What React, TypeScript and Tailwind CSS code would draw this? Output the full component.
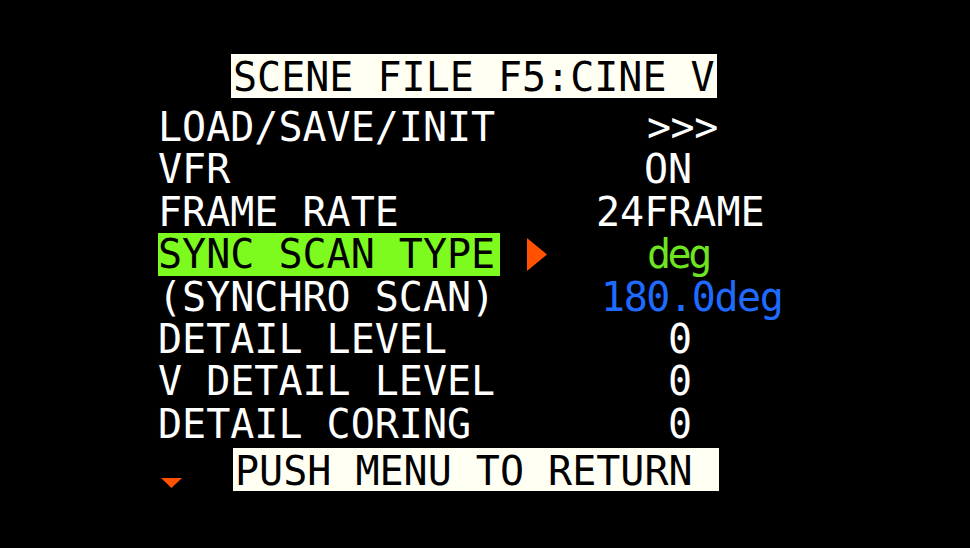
import React from 'react';

const rows: { label: string; value: string; offset: string; tone?: string }[] = [
  { label: 'LOAD/SAVE/INIT', value: '>>>', offset: 'ml-[53px] tracking-[-0.5px]' },
  { label: 'VFR', value: 'ON', offset: 'ml-[50px]' },
  { label: 'FRAME RATE', value: '24FRAME', offset: 'ml-[2px]' },
];

const rest: { label: string; value: string; offset: string; tone?: string }[] = [
  { label: '(SYNCHRO SCAN)', value: '180.0deg', offset: 'ml-[7px] tracking-[-1.4px]', tone: 'text-[#1f6bff]' },
  { label: 'DETAIL LEVEL', value: '0', offset: 'ml-[74px]' },
  { label: 'V DETAIL LEVEL', value: '0', offset: 'ml-[74px]' },
  { label: 'DETAIL CORING', value: '0', offset: 'ml-[74px]' },
];

function Row({ label, value, offset, tone }: { label: string; value: string; offset: string; tone?: string }) {
  return (
    <div className="flex h-[42.4px] leading-[42.4px] whitespace-pre">
      <span className="w-[436px] shrink-0">{label}</span>
      <span className={`${offset} ${tone ?? 'text-white'}`}>{value}</span>
    </div>
  );
}

export default function App() {
  return (
    <div className="w-[970px] h-[548px] bg-black overflow-hidden text-white font-['DejaVu_Sans_Mono',monospace] text-[40px]">
      <div className="pt-[54px] pl-[158px]">
        <div className="ml-[73px] w-[486px] h-[44px] bg-[#fffff4] text-black leading-[46px] pl-[2px] whitespace-pre">
          SCENE FILE F5:CINE V
        </div>

        <div className="mt-[8px]">
          {rows.map((r) => (
            <Row key={r.label} {...r} />
          ))}

          <div className="flex h-[42.4px] leading-[42.4px] whitespace-pre">
            <div className="w-[436px] shrink-0 flex items-start">
              <span className="w-[342px] bg-[#7dfa1e] text-black">SYNC SCAN TYPE</span>
              <svg className="ml-[27px] mt-[5px]" width="20" height="33" viewBox="0 0 20 33">
                <polygon points="0,0 20,16.5 0,33" fill="#ff5100" />
              </svg>
            </div>
            <span className="ml-[53px] tracking-[-3.5px] text-[#6fe522]">deg</span>
          </div>

          {rest.map((r) => (
            <Row key={r.label} {...r} />
          ))}

          <div className="flex items-start h-[46px] mt-[3px]">
            <svg className="ml-[3px] mt-[30px]" width="21" height="10" viewBox="0 0 21 10">
              <polygon points="0,0 21,0 10.5,10" fill="#ff5100" />
            </svg>
            <div className="ml-[51px] w-[486px] h-[43px] bg-[#fffff4] text-black leading-[46px] pl-[2px] whitespace-pre">
              PUSH MENU TO RETURN
            </div>
          </div>
        </div>
      </div>
    </div>
  );
}
